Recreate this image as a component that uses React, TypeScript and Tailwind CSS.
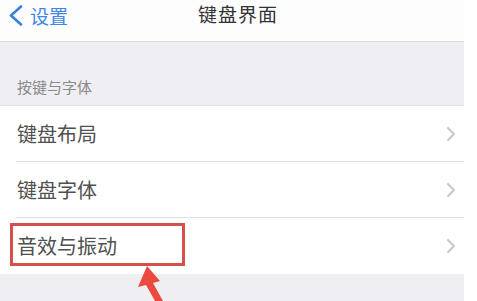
const font = { fontFamily: '"Noto Sans CJK SC", "Noto Sans", sans-serif' }

function Chevron() {
  return (
    <svg width="10" height="16" viewBox="0 0 10 16" className="shrink-0">
      <path d="M2 2 L8 8 L2 14" fill="none" stroke="#c7c7cc" strokeWidth="2" strokeLinecap="round" strokeLinejoin="round" />
    </svg>
  )
}

function Row({ label, last, boxed }: { label: string; last?: boolean; boxed?: boolean }) {
  return (
    <div className="relative h-[56px] flex items-center pl-[17px]">
      {boxed && (
        <div className="absolute left-[10px] top-[5px] w-[175px] h-[43px] border-[3px] border-[#d4504e]" />
      )}
      <span className="flex-1 text-[20px] text-[#505050] leading-none">{label}</span>
      <div className="pr-[8px] flex items-center">
        <Chevron />
      </div>
      {!last && <div className="absolute left-[16px] right-0 bottom-0 h-px bg-[#e2e2e4]" />}
    </div>
  )
}

export default function App() {
  return (
    <div className="relative w-[477px] h-[301px] bg-white overflow-hidden" style={font}>
      <div className="w-[464px] h-full bg-[#efeff3] flex flex-col">
        {/* Nav bar */}
        <div className="relative h-[42px] bg-[#fdfdfd] border-b border-[#dcdcdc]">
          <div className="absolute left-[8px] top-[5px] flex items-center gap-[6px]">
            <svg width="16" height="21" viewBox="0 0 16 21">
              <path d="M13 1.5 L3 10.5 L13 19.5" fill="none" stroke="#3a7fe0" strokeWidth="2.6" strokeLinecap="round" strokeLinejoin="round" />
            </svg>
            <span className="text-[19px] text-[#3e87e6] leading-none">设置</span>
          </div>
          <div className="absolute left-[198px] top-[4px] text-[19px] tracking-[1px] text-[#333] leading-none">
            键盘界面
          </div>
        </div>

        {/* Section header */}
        <div className="h-[63px] flex items-end pl-[17px] pb-[11px]">
          <span className="text-[15px] text-[#8a8a8a] leading-none">按键与字体</span>
        </div>

        {/* Rows */}
        <div className="bg-white border-t border-[#e2e2e4]">
          <Row label="键盘布局" />
          <Row label="键盘字体" />
          <Row label="音效与振动" last boxed />
        </div>
      </div>

      {/* Red arrow */}
      <svg className="absolute left-[130px] top-[260px]" width="40" height="41" viewBox="0 0 40 41">
        <path d="M17 6 L30 21 L23 23 L33 41 L25 41 L16 25 L8 27 Z" fill="#ec4a3f" />
      </svg>
    </div>
  )
}
